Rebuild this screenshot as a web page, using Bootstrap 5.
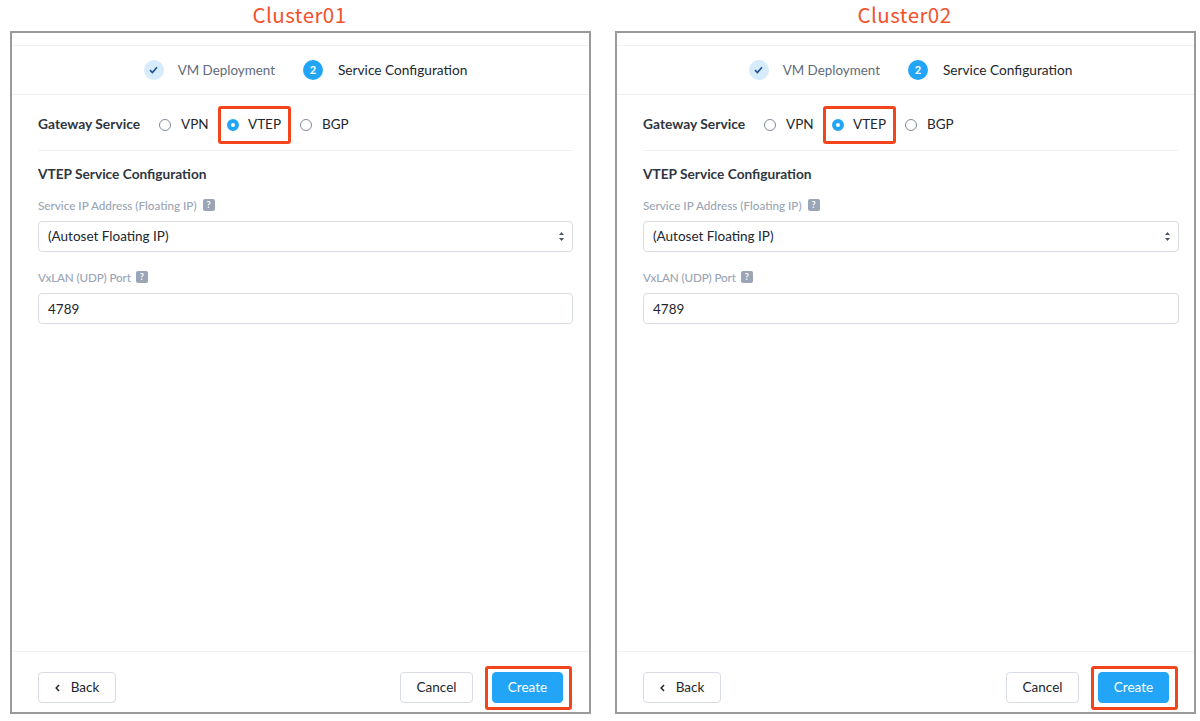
<!DOCTYPE html>
<html lang="en">
<head>
<meta charset="utf-8">
<title>Gateway</title>
<link href="https://cdn.jsdelivr.net/npm/bootstrap@5.3.0/dist/css/bootstrap.min.css" rel="stylesheet">
<style>
html,body{height:721px;overflow:hidden;background:#fff}
body{font-family:Lato,"Liberation Sans",sans-serif;color:#22272e;font-size:14px}
.sheet{padding:0 4px 7px 10px;gap:24px;height:721px}
.column{width:581px}
.cluster-title{height:31px;line-height:29px;font-family:"Noto Sans CJK JP",sans-serif;font-size:20.5px;font-weight:400;color:#f2512b;text-align:center;letter-spacing:.45px;padding-right:2px}
.frame{height:683px;border:2px solid #9a9a9a;background:#fff}
.topline{height:13px;border-bottom:1px solid #f1f2f4}
.stepper{height:49px;border-bottom:1px solid #eef0f3;gap:28px;padding-left:10px}
.step{gap:15px;font-size:13.7px}
.step-done{color:#5f6b7a;font-size:13.4px;gap:14px}
.step-dot{width:20px;height:20px;border-radius:50%;font-size:11px;font-weight:700}
.dot-done{background:#d6ebfb}
.dot-now{background:#22a5f7;color:#fff}
.pane{padding:0 16px 0 26px}
.column:last-child .pane{padding-right:15px}
.gateway{height:56px;padding-top:4px;border-bottom:1px solid #f1f2f4}
.gateway-name{font-weight:700;font-size:13.8px;color:#2f3640;width:121px}
.choice{font-size:13.5px;gap:10px;color:#22272e}
.choice-vpn{width:68px}
.choice-vtep{width:73px;gap:9px}
.knob{width:12px;height:12px;border-radius:50%;border:1px solid #7f8a99;background:#fff;flex:none}
.knob-on{border:4px solid #22a5f7}
.mark-box{position:absolute;border:3px solid #f2451c;border-radius:3px;pointer-events:none}
.mark-vtep{left:-9px;top:-8px;width:73px;height:38px}
.mark-create{left:-7px;top:-6px;width:87px;height:44px}
.section-title{font-weight:700;font-size:13.7px;margin-top:15px;line-height:16px;color:#2f3640}
.field-label{font-size:11.7px;color:#9aa5b5;line-height:14px;margin:0 0 9px;gap:6px;font-weight:500}
.hint{width:12px;height:12px;border-radius:2px;background:#9aa5b5;color:#fff;font-size:9px;font-weight:700;line-height:12px;text-align:center;display:inline-block}
.first-label{margin-top:16px}
.second-label{margin-top:18px;margin-bottom:9px;gap:5px;letter-spacing:-.15px}
.fake-input.form-control,.fake-input.form-select{height:31px;padding:0 9px;font-size:13.5px;border:1px solid #d8dce3;border-radius:4px;color:#22272e;font-family:inherit;box-shadow:none}
.fake-input.form-select{background-image:none}
.select-wrap{position:relative}
.updown{position:absolute;right:9px;top:11px;width:5px;height:9px}
.footer-bar{height:61px;border-top:1px solid #f1f2f4;padding:20px 26px 0}
.column:last-child .footer-bar{padding-right:25px}
.footer-btn.btn{height:31px;padding:0;font-size:13.5px;border:1px solid #d8dce3;border-radius:4px;color:#22272e;background:#fff;display:flex;align-items:center;justify-content:center}
.back-btn.btn{width:78px;gap:11px}
.cancel-btn.btn{width:73px}
.create-btn.btn{width:71px;background:#22a5f7;border-color:#22a5f7;color:#fff}
.create-wrap{margin-left:19px}
</style>
</head>
<body>
<div class="sheet d-flex">
  <section class="column d-flex flex-column">
    <div class="cluster-title">Cluster01</div>
    <div class="frame d-flex flex-column">
      <div class="topline"></div>
      <div class="stepper d-flex justify-content-center align-items-center">
        <div class="step step-done d-flex align-items-center"><span class="step-dot dot-done d-flex align-items-center justify-content-center"><svg width="9" height="8" viewBox="0 0 9 8"><path d="M1 4.2 3.4 6.5 8 1.2" fill="none" stroke="#1d4f91" stroke-width="1.6"/></svg></span>VM Deployment</div>
        <div class="step d-flex align-items-center"><span class="step-dot dot-now d-flex align-items-center justify-content-center">2</span>Service Configuration</div>
      </div>
      <div class="pane flex-grow-1">
        <div class="gateway d-flex align-items-center">
          <div class="gateway-name">Gateway Service</div>
          <div class="choice choice-vpn d-flex align-items-center"><span class="knob"></span>VPN</div>
          <div class="choice choice-vtep d-flex align-items-center position-relative"><span class="knob knob-on"></span>VTEP<span class="mark-box mark-vtep"></span></div>
          <div class="choice d-flex align-items-center"><span class="knob"></span>BGP</div>
        </div>
        <div class="section-title">VTEP Service Configuration</div>
        <div class="field-label first-label d-flex align-items-center">Service IP Address (Floating IP) <span class="hint">?</span></div>
        <div class="select-wrap">
          <select class="form-select fake-input"><option>(Autoset Floating IP)</option></select>
          <svg class="updown" viewBox="0 0 5 9"><path d="M2.5 0 5 3H0zM2.5 9 0 6h5z" fill="#4a5666"/></svg>
        </div>
        <div class="field-label second-label d-flex align-items-center">VxLAN (UDP) Port <span class="hint">?</span></div>
        <input class="form-control fake-input" value="4789">
      </div>
      <div class="footer-bar d-flex align-items-start justify-content-between">
        <button class="btn footer-btn back-btn"><svg width="5" height="8" viewBox="0 0 5 8"><path d="M4 1 1.2 4 4 7" fill="none" stroke="#22272e" stroke-width="1.5"/></svg>Back</button>
        <div class="d-flex align-items-center">
          <button class="btn footer-btn cancel-btn">Cancel</button>
          <div class="create-wrap position-relative"><button class="btn footer-btn create-btn">Create</button><span class="mark-box mark-create"></span></div>
        </div>
      </div>
    </div>
  </section>
  <section class="column d-flex flex-column">
    <div class="cluster-title">Cluster02</div>
    <div class="frame d-flex flex-column">
      <div class="topline"></div>
      <div class="stepper d-flex justify-content-center align-items-center">
        <div class="step step-done d-flex align-items-center"><span class="step-dot dot-done d-flex align-items-center justify-content-center"><svg width="9" height="8" viewBox="0 0 9 8"><path d="M1 4.2 3.4 6.5 8 1.2" fill="none" stroke="#1d4f91" stroke-width="1.6"/></svg></span>VM Deployment</div>
        <div class="step d-flex align-items-center"><span class="step-dot dot-now d-flex align-items-center justify-content-center">2</span>Service Configuration</div>
      </div>
      <div class="pane flex-grow-1">
        <div class="gateway d-flex align-items-center">
          <div class="gateway-name">Gateway Service</div>
          <div class="choice choice-vpn d-flex align-items-center"><span class="knob"></span>VPN</div>
          <div class="choice choice-vtep d-flex align-items-center position-relative"><span class="knob knob-on"></span>VTEP<span class="mark-box mark-vtep"></span></div>
          <div class="choice d-flex align-items-center"><span class="knob"></span>BGP</div>
        </div>
        <div class="section-title">VTEP Service Configuration</div>
        <div class="field-label first-label d-flex align-items-center">Service IP Address (Floating IP) <span class="hint">?</span></div>
        <div class="select-wrap">
          <select class="form-select fake-input"><option>(Autoset Floating IP)</option></select>
          <svg class="updown" viewBox="0 0 5 9"><path d="M2.5 0 5 3H0zM2.5 9 0 6h5z" fill="#4a5666"/></svg>
        </div>
        <div class="field-label second-label d-flex align-items-center">VxLAN (UDP) Port <span class="hint">?</span></div>
        <input class="form-control fake-input" value="4789">
      </div>
      <div class="footer-bar d-flex align-items-start justify-content-between">
        <button class="btn footer-btn back-btn"><svg width="5" height="8" viewBox="0 0 5 8"><path d="M4 1 1.2 4 4 7" fill="none" stroke="#22272e" stroke-width="1.5"/></svg>Back</button>
        <div class="d-flex align-items-center">
          <button class="btn footer-btn cancel-btn">Cancel</button>
          <div class="create-wrap position-relative"><button class="btn footer-btn create-btn">Create</button><span class="mark-box mark-create"></span></div>
        </div>
      </div>
    </div>
  </section>
</div>
<script src="https://cdn.jsdelivr.net/npm/bootstrap@5.3.0/dist/js/bootstrap.bundle.min.js"></script>
</body>
</html>
